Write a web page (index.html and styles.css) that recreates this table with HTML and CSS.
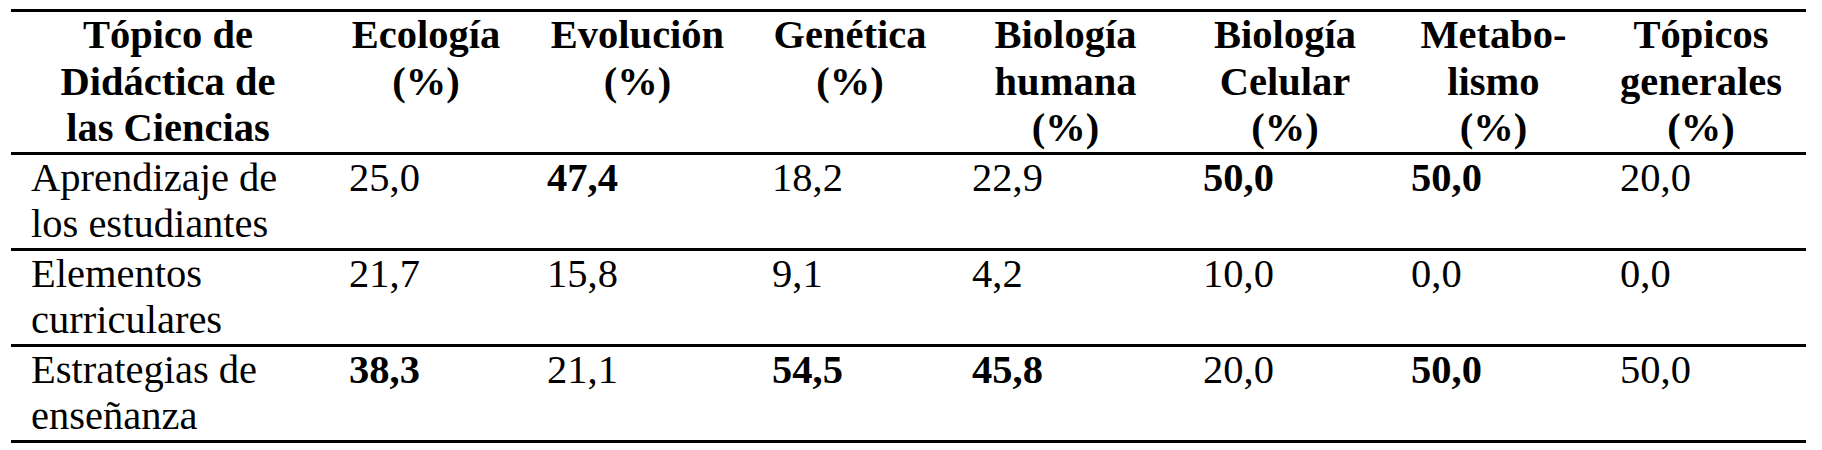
FILE: index.html
```html
<!DOCTYPE html>
<html>
<head>
<meta charset="utf-8">
<title>Tabla de porcentajes</title>
<link rel="stylesheet" href="styles.css">
</head>
<body>
<div class="page">
  <div class="grid-table">
    <div class="row head">
      <div class="cell">Tópico de<br>Didáctica de<br>las Ciencias</div>
      <div class="cell">Ecología<br>(%)</div>
      <div class="cell">Evolución<br>(%)</div>
      <div class="cell">Genética<br>(%)</div>
      <div class="cell">Biología<br>humana<br>(%)</div>
      <div class="cell">Biología<br>Celular<br>(%)</div>
      <div class="cell">Metabo-<br>lismo<br>(%)</div>
      <div class="cell">Tópicos<br>generales<br>(%)</div>
    </div>
    <div class="row">
      <div class="cell">Aprendizaje de los estudiantes</div>
      <div class="cell">25,0</div>
      <div class="cell hi">47,4</div>
      <div class="cell">18,2</div>
      <div class="cell">22,9</div>
      <div class="cell hi">50,0</div>
      <div class="cell hi">50,0</div>
      <div class="cell">20,0</div>
    </div>
    <div class="row">
      <div class="cell">Elementos curriculares</div>
      <div class="cell">21,7</div>
      <div class="cell">15,8</div>
      <div class="cell">9,1</div>
      <div class="cell">4,2</div>
      <div class="cell">10,0</div>
      <div class="cell">0,0</div>
      <div class="cell">0,0</div>
    </div>
    <div class="row">
      <div class="cell">Estrategias de enseñanza</div>
      <div class="cell hi">38,3</div>
      <div class="cell">21,1</div>
      <div class="cell hi">54,5</div>
      <div class="cell hi">45,8</div>
      <div class="cell">20,0</div>
      <div class="cell hi">50,0</div>
      <div class="cell">50,0</div>
    </div>
  </div>
</div>
</body>
</html>
```
FILE: styles.css
```css
body {
  margin: 0;
  background: #ffffff;
}

.page {
  padding: 9px 0 0 11px;
}

.grid-table {
  width: 1795px;
  border-top: 3px solid #000000;
  font-family: "Liberation Serif", serif;
  font-size: 40.5px;
  line-height: 46.5px;
  color: #000000;
}

.row {
  display: grid;
  grid-template-columns: 318px 198px 225px 200px 231px 208px 209px 206px;
  border-bottom: 3px solid #000000;
  min-height: 93px;
}

.cell {
  padding: 0 20px;
  font-family: "Liberation Serif", serif;
}

.head .cell {
  padding: 0 22px 0 18px;
  font-weight: bold;
  text-align: center;
}

.hi {
  font-weight: bold;
}
```
